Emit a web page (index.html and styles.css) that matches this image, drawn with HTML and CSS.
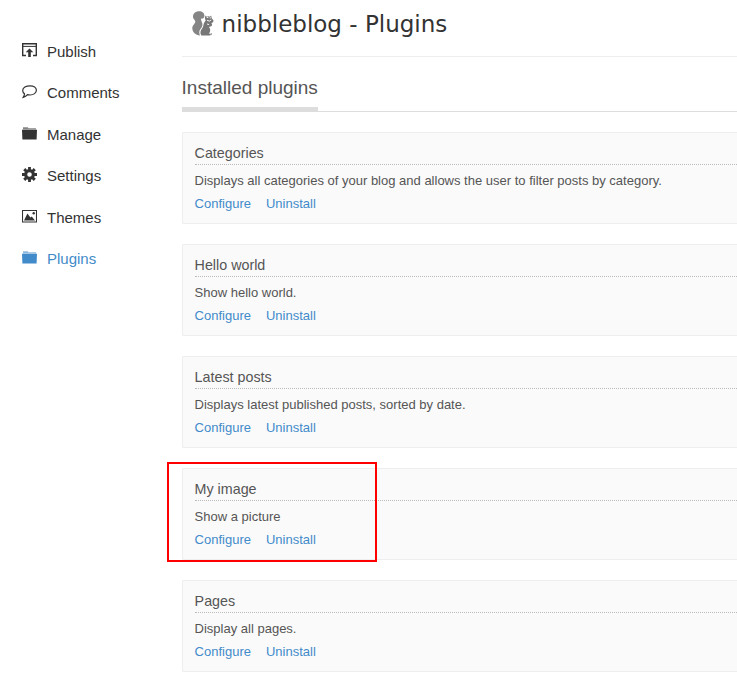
FILE: index.html
```
<!DOCTYPE html>
<html lang="en">
<head>
<meta charset="utf-8">
<title>nibbleblog - Plugins</title>
<link rel="stylesheet" href="styles.css">
</head>
<body>
<div class="layout">
  <nav class="menu">
    <a class="item"><svg class="icon low" viewBox="0 0 15 15"><path d="M4 12.500H.7V.8h13.600v11.700H11" fill="none" stroke="currentColor" stroke-width="1.400"/><path d="M.7 3.400h13.600" stroke="currentColor" stroke-width="1"/><path d="M7.500 5.400L3.700 9.300h2.500V14h2.600V9.300h2.500z" fill="currentColor"/></svg><span>Publish</span></a>
    <a class="item"><svg class="icon" viewBox="0 0 15 15"><path d="M8 1.800c3.700 0 6.400 1.900 6.400 4.500S11.700 11 8 11c-.9 0-1.700-.1-2.500-.3-1 1.300-2.300 2.200-4.300 2.700.8-1.100 1.300-2.200 1.300-3.600C1.300 9 .7 7.800.7 6.500.7 3.700 4 1.800 8 1.800z" fill="none" stroke="currentColor" stroke-width="1.200"/></svg><span>Comments</span></a>
    <a class="item"><svg class="icon low" viewBox="0 0 15 15"><path d="M1 3.500V1.200h4.800l.8 1h7.400v1.300z" fill="currentColor" opacity=".6"/><path d="M0 3.700h15l-.4 9.800H.4z" fill="currentColor"/></svg><span>Manage</span></a>
    <a class="item"><svg class="icon" viewBox="0 0 15 15"><path d="M6.100 0h2.800v2.200l1.200.5L11.700 1.100l2.100 2.100-1.600 1.600.5 1.300H15v2.800h-2.300l-.5 1.300 1.600 1.600-2.100 2.100-1.600-1.600-1.200.5V15H6.100v-2.200l-1.200-.5-1.600 1.600-2.100-2.100 1.600-1.600-.5-1.300H0V6.100h2.300l.5-1.300-1.600-1.600 2.100-2.100 1.600 1.600 1.200-.5zM7.500 5.200a2.300 2.300 0 1 0 0 4.600 2.300 2.300 0 0 0 0-4.600z" fill="currentColor" fill-rule="evenodd"/></svg><span>Settings</span></a>
    <a class="item"><svg class="icon low" viewBox="0 0 15 15"><path d="M.5 1.500h14v11.500H.5z" fill="none" stroke="currentColor" stroke-width="1.100"/><path d="M2 11.600l3.400-7 3 4 1.400-1.200 3.200 4.200z" fill="currentColor"/><circle cx="11.700" cy="4.200" r="1.200" fill="currentColor"/></svg><span>Themes</span></a>
    <a class="item active"><svg class="icon low" viewBox="0 0 15 15"><path d="M1 3.500V1.200h4.800l.8 1h7.400v1.300z" fill="currentColor" opacity=".6"/><path d="M0 3.700h15l-.4 9.800H.4z" fill="currentColor"/></svg><span>Plugins</span></a>
  </nav>
  <main class="content">
    <header class="header">
      <svg class="logo" viewBox="0 0 22 25"><path d="M8 24.500C3.500 24.300.3 21 .3 17.300c0-3 2.700-4.300 3-6.800C3.400 9 1 8.300 1 5.500 1 2.300 3.700.2 7 .2c3.300 0 5.600 2 5.400 4.700-.1 2-1.700 3.200-3.500 2.700 0 2.700 2 4 1.500 7-.4 2.600-3.100 3.900-3.100 6.400 0 1.600.3 2.700.7 3.500z" fill="#858585"/><path d="M9.300 24.600c-1.600-2.900-.8-5.300.8-7.100 1.600-1.900 1.200-4.200 2-5.700.5-1 1.300-1.700 1.600-2.500-.8-1.200-1-3-.1-4.700l1.300 1.200c.8-.7 2.200-.7 3 0l1.300-1.400.4 2.500 2 2.800c-.3 1.600-1.200 2.100-2.300 2.400 1 .9 1 2.200 0 3.200l-2.400.8c1.900 1.500 1.700 4.800.1 6.500l1.900.6-.6 1.400z" fill="#777"/><path d="M14.600 6.300l1.800.4M17.700 6.900h1.300M15 9.200l2.300.9 1.900-1.100M15 13l2.100.6" stroke="#fff" stroke-width=".9" fill="none"/><circle cx="19.200" cy="23" r=".8" fill="#777"/></svg>
      <h1 class="title">nibbleblog - Plugins</h1>
    </header>
    <div class="section"><h2 class="heading">Installed plugins</h2></div>
    <article class="card"><h3 class="name">Categories</h3><p class="text">Displays all categories of your blog and allows the user to filter posts by category.</p><div class="links"><a>Configure</a><a>Uninstall</a></div></article>
    <article class="card"><h3 class="name">Hello world</h3><p class="text">Show hello world.</p><div class="links"><a>Configure</a><a>Uninstall</a></div></article>
    <article class="card"><h3 class="name">Latest posts</h3><p class="text">Displays latest published posts, sorted by date.</p><div class="links"><a>Configure</a><a>Uninstall</a></div></article>
    <article class="card marked"><h3 class="name">My image</h3><p class="text">Show a picture</p><div class="links"><a>Configure</a><a>Uninstall</a></div></article>
    <article class="card"><h3 class="name">Pages</h3><p class="text">Display all pages.</p><div class="links"><a>Configure</a><a>Uninstall</a></div></article>
  </main>
</div>
</body>
</html>
```
FILE: styles.css
```
*, *::after { box-sizing: border-box; }
body { margin: 0; background: #fff; color: #555; font-family: "Liberation Sans", Arial, sans-serif; font-size: 13px; overflow: hidden; }
h1, h2, h3, p { margin: 0; font-weight: 400; }
.layout { display: grid; grid-template-columns: 181.6px 1fr; height: 693px; }
.menu { padding: 30.8px 0 0 22px; }
.item { display: flex; align-items: center; gap: 10px; height: 41.4px; color: #333; font-size: 15px; }
.icon { width: 15px; height: 15px; flex: none; margin-top: -3px; }
.low { margin-top: -1px; }
.active { color: #428bca; }
.header { display: flex; height: 57px; padding: 11px 0 0 10px; border-bottom: 1px solid #eee; }
.logo { width: 22px; height: 25px; flex: none; }
.title { margin-left: 8px; font: 23px/26px "DejaVu Sans", sans-serif; color: #333; }
.section { display: flex; height: 55px; border-bottom: 1px solid #ddd; margin-bottom: 20px; }
.heading { height: 55px; padding-top: 19px; font-size: 19px; line-height: 24px; border-bottom: 5px solid #ddd; }
.card { position: relative; height: 92px; margin-bottom: 20px; padding: 12px 0 0 12px; border: 1px solid #eee; border-right: 0; border-radius: 2px 0 0 2px; background: #fafafa; }
.name { height: 20px; font-size: 14.3px; line-height: 17px; border-bottom: 1px dotted #bbb; }
.text { margin-top: 8px; line-height: 16px; }
.links { display: flex; gap: 15px; margin-top: 7px; line-height: 16px; color: #428bca; }
.marked::after { content: ""; position: absolute; left: -15.600px; top: -7px; width: 210px; height: 100px; border: 2px solid #f00; }
```
